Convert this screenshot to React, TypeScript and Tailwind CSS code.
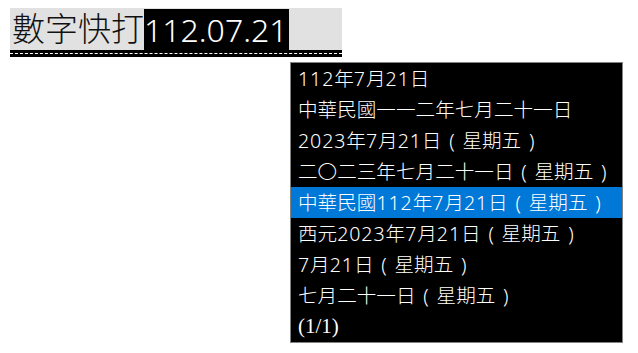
import React from "react";

const items = [
  "112年7月21日",
  "中華民國一一二年七月二十一日",
  "2023年7月21日（星期五）",
  "二〇二三年七月二十一日（星期五）",
  "中華民國112年7月21日（星期五）",
  "西元2023年7月21日（星期五）",
  "7月21日（星期五）",
  "七月二十一日（星期五）",
];

function Row({ text }: { text: string }) {
  const parts = text.match(/[0-9]+|（|）|[^0-9（）]+/g) || [];
  return (
    <>
      {parts.map((p, i) => {
        if (/^[0-9]+$/.test(p))
          return (
            <span key={i} className="tracking-[0.9px]">
              {p}
            </span>
          );
        if (p === "（" || p === "）")
          return (
            <span key={i} className="inline-block w-[21px] text-center">
              {p === "（" ? "(" : ")"}
            </span>
          );
        return <span key={i}>{p}</span>;
      })}
    </>
  );
}

export default function App() {
  const font = { fontFamily: '"Noto Sans", "Noto Sans CJK TC", sans-serif' };
  return (
    <div className="w-[638px] h-[353px] bg-white overflow-hidden" style={font}>
      <div className="pt-[8px] pl-[10px]">
        <div className="w-[332px] h-[42px] bg-[#e1e1e1] flex items-center font-light">
          <span className="pl-[2px] text-[33px] leading-[42px] text-[#111]">數字快打</span>
          <span className="bg-black text-white text-[32px] leading-[41px] h-[41px] pr-[1px] flex items-center">112.07.21</span>
        </div>
        <div className="w-[332px] h-[7px] bg-black pt-[3px]">
          <div className="border-t border-dashed border-white" />
        </div>
      </div>
      <div className="ml-[290px] mt-[5px] w-[333px] border border-[#828282] bg-black">
        {items.map((t, i) => (
          <div
            key={i}
            className={
              "h-[31px] pl-[7px] flex items-center text-[19.6px] text-white whitespace-nowrap font-light " +
              (i === 4 ? "bg-[#0078d7]" : "")
            }
          >
            <Row text={t} />
          </div>
        ))}
        <div
          className="h-[31px] pl-[7px] flex items-center text-[21px] text-white whitespace-nowrap"
          style={{ fontFamily: '"Liberation Serif", serif' }}
        >
          (1/1)
        </div>
      </div>
    </div>
  );
}
